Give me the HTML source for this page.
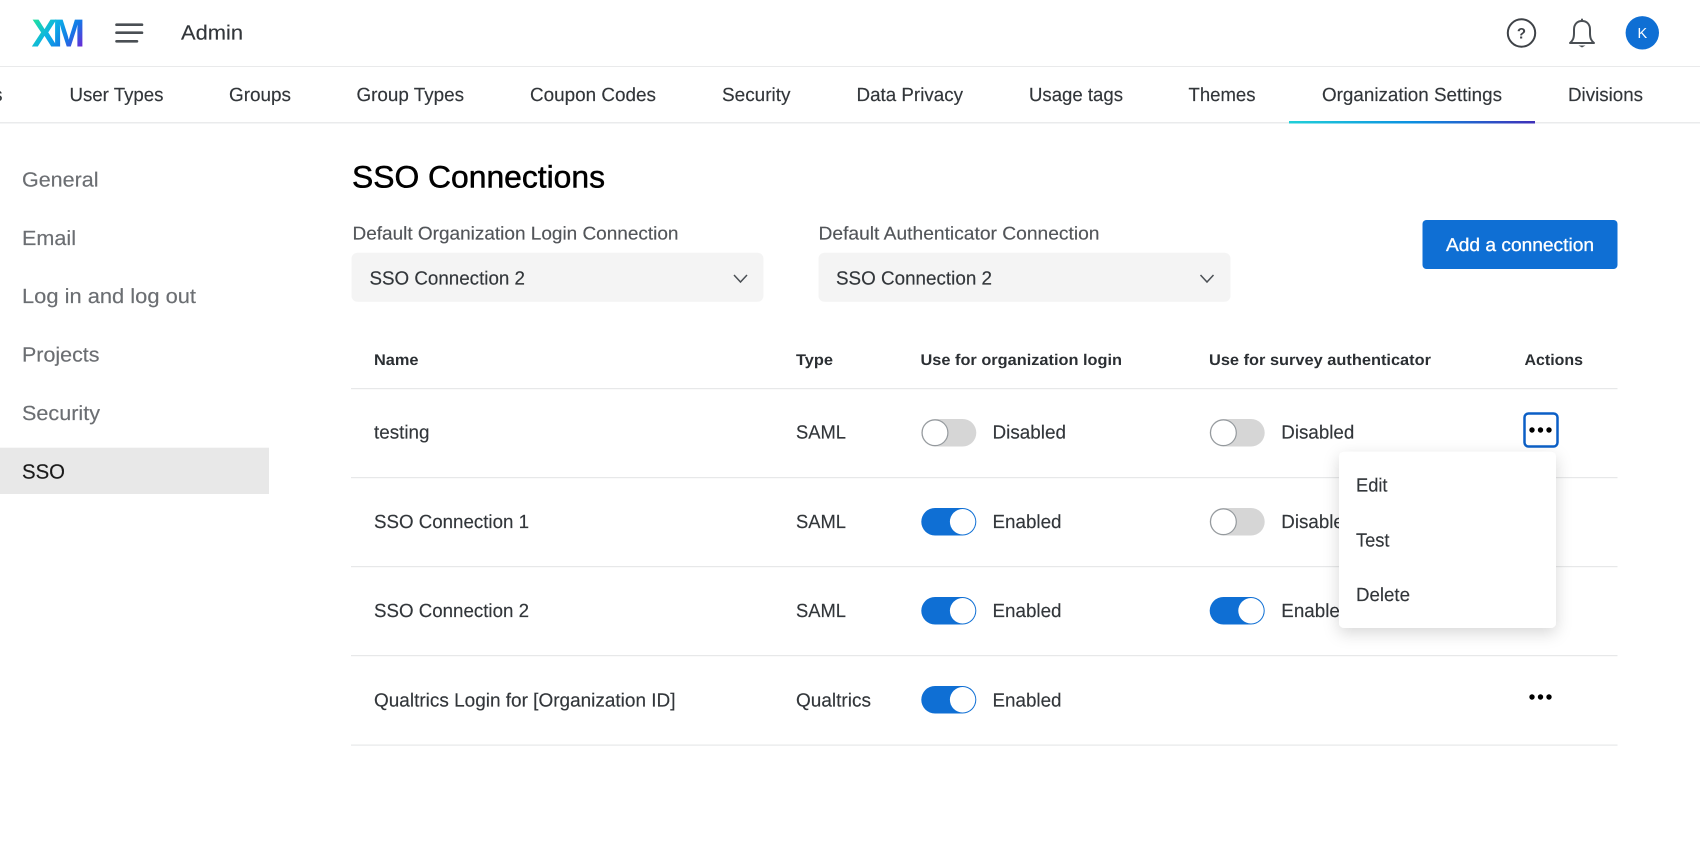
<!DOCTYPE html>
<html><head><meta charset="utf-8"><title>SSO Connections</title>
<style>
html,body{margin:0;padding:0;background:#fff;width:1700px;height:846px;overflow:hidden}
svg{display:block}
text{font-family:"Liberation Sans",sans-serif;font-size:19px;fill:#32363a;stroke:#32363a;stroke-width:.15px;text-rendering:geometricPrecision}
.side{fill:#6b6e72;stroke:#6b6e72;font-size:20.5px}
.h{font-weight:bold;font-size:15.5px;fill:#2b2f33;stroke:none}
.lab{fill:#525559;stroke:#525559;font-size:18.5px}
</style></head><body>
<svg width="1700" height="846" viewBox="0 0 1700 846" xmlns="http://www.w3.org/2000/svg">
<defs>
<linearGradient id="xm" gradientUnits="userSpaceOnUse" x1="36" y1="17" x2="80" y2="49">
<stop offset="0" stop-color="#21e0a0"/><stop offset=".38" stop-color="#0bb0e6"/><stop offset=".7" stop-color="#1478e6"/><stop offset="1" stop-color="#6a2ad6"/></linearGradient>
<linearGradient id="tab" x1="0" x2="1" y1="0" y2="0"><stop offset="0" stop-color="#21d0d8"/><stop offset=".5" stop-color="#0b8fe0"/><stop offset="1" stop-color="#3f2fb8"/></linearGradient>
<filter id="sh" x="-20%" y="-20%" width="140%" height="150%"><feDropShadow dx="0" dy="5" stdDeviation="8" flood-color="#000" flood-opacity=".16"/></filter>
</defs>

<!-- header -->
<text x="31.500" y="46.700" style="font-size:39px;font-weight:bold;fill:url(#xm);stroke:none"><tspan>X</tspan><tspan dx="-5">M</tspan></text>
<g stroke="#4a4f54" stroke-width="2.600" stroke-linecap="round">
<path d="M116.500 24.700H142M116.500 32.700H142M116.500 41.300H137"/></g>
<text x="181" y="39.500" textLength="62" lengthAdjust="spacingAndGlyphs" style="font-size:20.500px">Admin</text>
<circle cx="1521.500" cy="33" r="13.700" fill="none" stroke="#3e4247" stroke-width="2"/>
<text x="1521.500" y="38.500" text-anchor="middle" style="font-size:15px;font-weight:bold;fill:#3e4247;stroke:none">?</text>
<path d="M1570 43h24c-3-2.500-4-5-4-10v-3.500c0-5-3-8.500-8-8.500s-8 3.500-8 8.500v3.500c0 5-1 7.500-4 10z" fill="none" stroke="#4a4f54" stroke-width="2" stroke-linejoin="round"/>
<path d="M1582 19.500v1.500" stroke="#4a4f54" stroke-width="2" stroke-linecap="round"/>
<path d="M1578.500 45.500h7l-3.500 2z" fill="#4a4f54"/>
<circle cx="1642.300" cy="32.800" r="16.700" fill="#0f6fd4"/>
<text x="1642.300" y="38.200" text-anchor="middle" style="font-size:14.500px;fill:#fff;stroke:none">K</text>
<rect x="0" y="66" width="1700" height="1" fill="#e9eaeb"/>

<!-- tabs -->
<text x="-7" y="101" style="font-size:19px">s</text>
<text x="69.500" y="101" textLength="94" lengthAdjust="spacingAndGlyphs">User Types</text>
<text x="229" y="101" textLength="62" lengthAdjust="spacingAndGlyphs">Groups</text>
<text x="356.500" y="101" textLength="107.500" lengthAdjust="spacingAndGlyphs">Group Types</text>
<text x="530" y="101" textLength="126" lengthAdjust="spacingAndGlyphs">Coupon Codes</text>
<text x="722" y="101" textLength="68.500" lengthAdjust="spacingAndGlyphs">Security</text>
<text x="856.500" y="101" textLength="106.500" lengthAdjust="spacingAndGlyphs">Data Privacy</text>
<text x="1029" y="101" textLength="94" lengthAdjust="spacingAndGlyphs">Usage tags</text>
<text x="1188.500" y="101" textLength="67" lengthAdjust="spacingAndGlyphs">Themes</text>
<text x="1322" y="101" textLength="180" lengthAdjust="spacingAndGlyphs">Organization Settings</text>
<text x="1568" y="101" textLength="75" lengthAdjust="spacingAndGlyphs">Divisions</text>
<rect x="0" y="122" width="1700" height="1.500" fill="#eaebec"/>
<rect x="1289" y="121" width="246" height="2.500" fill="url(#tab)"/>

<!-- sidebar -->
<rect x="0" y="447.700" width="269" height="46.300" fill="#e8e8e8"/>
<text class="side" x="22" y="186.700" textLength="76.500" lengthAdjust="spacingAndGlyphs">General</text>
<text class="side" x="22" y="245" textLength="54" lengthAdjust="spacingAndGlyphs">Email</text>
<text class="side" x="22" y="303" textLength="174" lengthAdjust="spacingAndGlyphs">Log in and log out</text>
<text class="side" x="22" y="361.500" textLength="77.500" lengthAdjust="spacingAndGlyphs">Projects</text>
<text class="side" x="22" y="420" textLength="78" lengthAdjust="spacingAndGlyphs">Security</text>
<text class="side" x="22" y="478.300" textLength="43" lengthAdjust="spacingAndGlyphs" style="fill:#1a1a1a;stroke:#1a1a1a">SSO</text>

<!-- title + selects -->
<text x="352" y="187.500" textLength="253" lengthAdjust="spacingAndGlyphs" style="font-size:31px;fill:#000;stroke:#000;stroke-width:.5px">SSO Connections</text>
<text class="lab" x="352.500" y="239.500" textLength="326" lengthAdjust="spacingAndGlyphs">Default Organization Login Connection</text>
<text class="lab" x="818.500" y="239.500" textLength="281" lengthAdjust="spacingAndGlyphs">Default Authenticator Connection</text>
<rect x="351.500" y="252.700" width="412" height="49" rx="6" fill="#f4f4f4"/>
<rect x="818.500" y="252.700" width="412" height="49" rx="6" fill="#f4f4f4"/>
<text x="369.500" y="284.500" textLength="155.500" lengthAdjust="spacingAndGlyphs">SSO Connection 2</text>
<text x="836" y="284.500" textLength="156" lengthAdjust="spacingAndGlyphs">SSO Connection 2</text>
<path d="M734 275l6.500 7 6.500-7M1200.500 275l6.500 7 6.500-7" fill="none" stroke="#4a4f54" stroke-width="1.500"/>
<rect x="1422.500" y="220" width="195" height="49" rx="4" fill="#0f6fd4"/>
<text x="1446" y="251" textLength="148" lengthAdjust="spacingAndGlyphs" style="fill:#fff;stroke:#fff;stroke-width:.3px;font-size:18.500px">Add a connection</text>

<!-- table -->
<text class="h" x="374" y="365" textLength="44.500" lengthAdjust="spacingAndGlyphs">Name</text>
<text class="h" x="796" y="365" textLength="37" lengthAdjust="spacingAndGlyphs">Type</text>
<text class="h" x="920.500" y="365" textLength="201.500" lengthAdjust="spacingAndGlyphs">Use for organization login</text>
<text class="h" x="1209" y="365" textLength="222" lengthAdjust="spacingAndGlyphs">Use for survey authenticator</text>
<text class="h" x="1524.500" y="365" textLength="58.500" lengthAdjust="spacingAndGlyphs">Actions</text>
<g fill="#e7e8e9">
<rect x="351" y="388" width="1266.500" height="1.200"/>
<rect x="351" y="477" width="1266.500" height="1.200"/>
<rect x="351" y="566" width="1266.500" height="1.200"/>
<rect x="351" y="655" width="1266.500" height="1.200"/>
<rect x="351" y="744.500" width="1266.500" height="1.200"/>
</g>

<text x="374" y="438.500" textLength="55.500" lengthAdjust="spacingAndGlyphs">testing</text>
<text x="374" y="528" textLength="155" lengthAdjust="spacingAndGlyphs">SSO Connection 1</text>
<text x="374" y="617" textLength="155" lengthAdjust="spacingAndGlyphs">SSO Connection 2</text>
<text x="374" y="706.500" textLength="301.500" lengthAdjust="spacingAndGlyphs">Qualtrics Login for [Organization ID]</text>
<text x="796" y="438.500" textLength="50" lengthAdjust="spacingAndGlyphs">SAML</text>
<text x="796" y="528" textLength="50" lengthAdjust="spacingAndGlyphs">SAML</text>
<text x="796" y="617" textLength="50" lengthAdjust="spacingAndGlyphs">SAML</text>
<text x="796" y="706.500" textLength="75" lengthAdjust="spacingAndGlyphs">Qualtrics</text>

<!-- toggles col 1 -->
<rect x="921.300" y="419" width="55" height="27.500" rx="13.750" fill="#d6d6d6"/>
<circle cx="935" cy="432.750" r="12.900" fill="#fff" stroke="#959a9e" stroke-width="1.200"/>
<text x="992.500" y="438.500" textLength="73.500" lengthAdjust="spacingAndGlyphs">Disabled</text>

<rect x="921.300" y="508" width="55" height="27.500" rx="13.750" fill="#0f6fd4"/>
<circle cx="962.600" cy="521.750" r="12.700" fill="#fff"/>
<text x="992.500" y="528" textLength="69" lengthAdjust="spacingAndGlyphs">Enabled</text>

<rect x="921.300" y="597" width="55" height="27.500" rx="13.750" fill="#0f6fd4"/>
<circle cx="962.600" cy="610.750" r="12.700" fill="#fff"/>
<text x="992.500" y="617" textLength="69" lengthAdjust="spacingAndGlyphs">Enabled</text>

<rect x="921.300" y="686" width="55" height="27.500" rx="13.750" fill="#0f6fd4"/>
<circle cx="962.600" cy="699.750" r="12.700" fill="#fff"/>
<text x="992.500" y="706.500" textLength="69" lengthAdjust="spacingAndGlyphs">Enabled</text>

<!-- toggles col 2 -->
<rect x="1209.700" y="419" width="55" height="27.500" rx="13.750" fill="#d6d6d6"/>
<circle cx="1223.400" cy="432.750" r="12.900" fill="#fff" stroke="#959a9e" stroke-width="1.200"/>
<text x="1281.300" y="438.500" textLength="73" lengthAdjust="spacingAndGlyphs">Disabled</text>

<rect x="1209.700" y="508" width="55" height="27.500" rx="13.750" fill="#d6d6d6"/>
<circle cx="1223.400" cy="521.750" r="12.900" fill="#fff" stroke="#959a9e" stroke-width="1.200"/>
<text x="1281.300" y="528" textLength="73" lengthAdjust="spacingAndGlyphs">Disabled</text>

<rect x="1209.700" y="597" width="55" height="27.500" rx="13.750" fill="#0f6fd4"/>
<circle cx="1251" cy="610.750" r="12.700" fill="#fff"/>
<text x="1281.300" y="617" textLength="69" lengthAdjust="spacingAndGlyphs">Enabled</text>

<!-- action buttons -->
<rect x="1524.500" y="413.500" width="33" height="33" rx="4" fill="#fff" stroke="#0b5fc6" stroke-width="2.500"/>
<g fill="#000">
<circle cx="1532" cy="430" r="2.700"/><circle cx="1540.500" cy="430" r="2.700"/><circle cx="1549" cy="430" r="2.700"/>
<circle cx="1532" cy="697" r="2.700"/><circle cx="1540.500" cy="697" r="2.700"/><circle cx="1549" cy="697" r="2.700"/>
</g>

<!-- menu -->
<rect x="1339" y="451.700" width="217" height="176.300" rx="5" fill="#fff" filter="url(#sh)"/>
<text x="1356" y="491.500" textLength="31.500" lengthAdjust="spacingAndGlyphs">Edit</text>
<text x="1356" y="546.500" textLength="33.500" lengthAdjust="spacingAndGlyphs">Test</text>
<text x="1356" y="601.200" textLength="54" lengthAdjust="spacingAndGlyphs">Delete</text>
</svg>
</body></html>
